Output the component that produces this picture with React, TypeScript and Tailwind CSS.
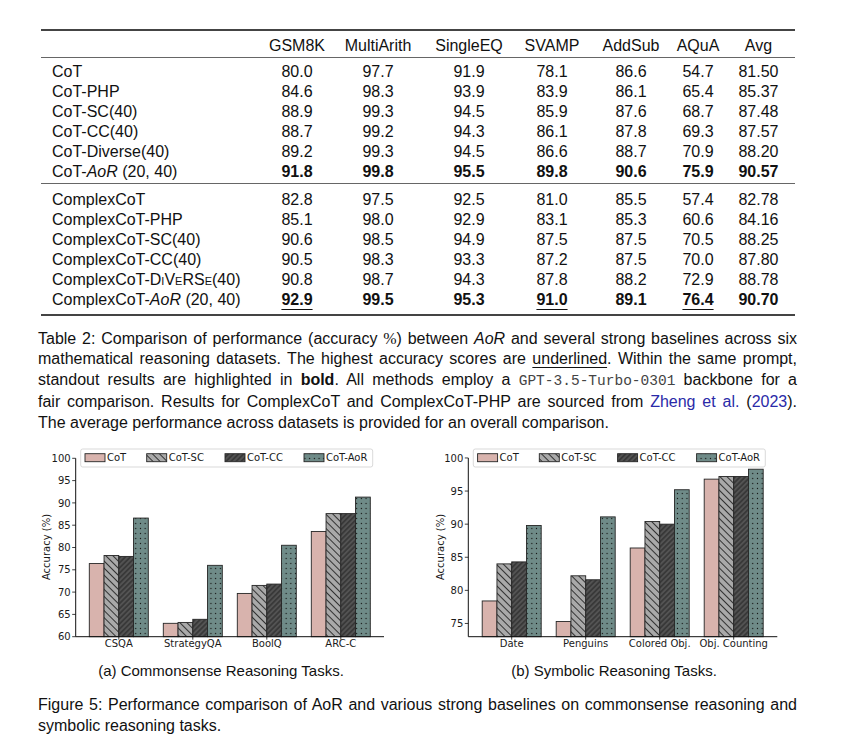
import React from "react";

const colW = ["w-[219px]", "w-[74px]", "w-[88px]", "w-[94px]", "w-[72px]", "w-[86px]", "w-[48px]", "w-[73px]"];
const heads = ["GSM8K", "MultiArith", "SingleEQ", "SVAMP", "AddSub", "AQuA", "Avg"];

type Row = { label: React.ReactNode; vals: string[]; bold?: boolean; under?: number[] };

const cotRows: Row[] = [
  { label: "CoT", vals: ["80.0", "97.7", "91.9", "78.1", "86.6", "54.7", "81.50"] },
  { label: "CoT-PHP", vals: ["84.6", "98.3", "93.9", "83.9", "86.1", "65.4", "85.37"] },
  { label: "CoT-SC(40)", vals: ["88.9", "99.3", "94.5", "85.9", "87.6", "68.7", "87.48"] },
  { label: "CoT-CC(40)", vals: ["88.7", "99.2", "94.3", "86.1", "87.8", "69.3", "87.57"] },
  { label: "CoT-Diverse(40)", vals: ["89.2", "99.3", "94.5", "86.6", "88.7", "70.9", "88.20"] },
  { label: <>CoT-<i>AoR</i> (20, 40)</>, vals: ["91.8", "99.8", "95.5", "89.8", "90.6", "75.9", "90.57"], bold: true },
];

const complexRows: Row[] = [
  { label: "ComplexCoT", vals: ["82.8", "97.5", "92.5", "81.0", "85.5", "57.4", "82.78"] },
  { label: "ComplexCoT-PHP", vals: ["85.1", "98.0", "92.9", "83.1", "85.3", "60.6", "84.16"] },
  { label: "ComplexCoT-SC(40)", vals: ["90.6", "98.5", "94.9", "87.5", "87.5", "70.5", "88.25"] },
  { label: "ComplexCoT-CC(40)", vals: ["90.5", "98.3", "93.3", "87.2", "87.5", "70.0", "87.80"] },
  {
    label: <>ComplexCoT-<span className="[font-variant:small-caps]">DiVeRSe</span>(40)</>,
    vals: ["90.8", "98.7", "94.3", "87.8", "88.2", "72.9", "88.78"],
  },
  { label: <>ComplexCoT-<i>AoR</i> (20, 40)</>, vals: ["92.9", "99.5", "95.3", "91.0", "89.1", "76.4", "90.70"], bold: true, under: [0, 3, 5] },
];

const TableRow = ({ row }: { row: Row }) => (
  <div className="flex h-[20px] items-center leading-[20px]">
    <div className={`${colW[0]} pl-[11px] whitespace-nowrap`}>{row.label}</div>
    {row.vals.map((v, i) => (
      <div key={i} className={`${colW[i + 1]} text-center`}>
        <span
          className={`${row.bold ? "font-bold" : ""} ${row.under?.includes(i) ? "underline decoration-1 underline-offset-[4px]" : ""}`}
        >
          {v}
        </span>
      </div>
    ))}
  </div>
);

type ChartCfg = {
  id: string;
  w: number;
  axisL: number;
  axisR: number;
  c0: number;
  yMin: number;
  px: number;
  ticks: number[];
  groups: string[];
  data: number[][];
  legendX: number;
  ylabelX: number;
};

const BASE = 195.7;
const BAR = 14.75;
const legendNames = ["CoT", "CoT-SC", "CoT-CC", "CoT-AoR"];
const patchOff = [4.3, 66, 144.3, 223.3];

const BarChart = ({ cfg }: { cfg: ChartCfg }) => {
  const y = (v: number) => BASE - (v - cfg.yMin) * cfg.px;
  const fills = [
    "#d8b3ad",
    `url(#${cfg.id}-sc)`,
    `url(#${cfg.id}-cc)`,
    `url(#${cfg.id}-aor)`,
  ];
  return (
    <svg width={cfg.w} height={220} className="block" style={{ fontFamily: '"DejaVu Sans", sans-serif' }}>
      <defs>
        <pattern id={`${cfg.id}-sc`} patternUnits="userSpaceOnUse" width="5" height="5" patternTransform="rotate(45)">
          <rect width="5" height="5" fill="#a9a9a9" />
          <line x1="0" y1="2.5" x2="5" y2="2.5" stroke="#141414" strokeWidth="0.8" />
        </pattern>
        <pattern id={`${cfg.id}-cc`} patternUnits="userSpaceOnUse" width="5" height="3.6" patternTransform="rotate(-45)">
          <rect width="5" height="3.6" fill="#535353" />
          <line x1="0" y1="1.8" x2="5" y2="1.8" stroke="#141414" strokeWidth="0.8" />
        </pattern>
        <pattern id={`${cfg.id}-aor`} patternUnits="userSpaceOnUse" width="4.7" height="5">
          <rect width="4.7" height="5" fill="#6f8b88" />
          <circle cx="2.35" cy="2.5" r="0.65" fill="#141414" />
        </pattern>
      </defs>

      {/* bars */}
      {cfg.data.map((vals, g) => {
        const c = cfg.c0 + g * 74;
        return vals.map((v, k) => (
          <rect
            key={`${g}-${k}`}
            x={c - 29.5 + k * BAR}
            y={y(v)}
            width={BAR}
            height={BASE - y(v)}
            fill={fills[k]}
            stroke="#262626"
            strokeWidth="0.9"
          />
        ));
      })}

      {/* axes */}
      <line x1={cfg.axisL} y1={y(100)} x2={cfg.axisL} y2={BASE} stroke="#111" strokeWidth="1" />
      <line x1={cfg.axisL} y1={BASE} x2={cfg.axisR} y2={BASE} stroke="#111" strokeWidth="1" />
      {cfg.ticks.map((t) => (
        <g key={t}>
          <line x1={cfg.axisL - 3.5} y1={y(t)} x2={cfg.axisL} y2={y(t)} stroke="#111" strokeWidth="0.8" />
          <text x={cfg.axisL - 5} y={y(t)} dy="0.36em" textAnchor="end" fontSize="10" fill="#1a1a1a">
            {t}
          </text>
        </g>
      ))}
      {cfg.groups.map((g, i) => (
        <g key={g}>
          <line x1={cfg.c0 + i * 74} y1={BASE} x2={cfg.c0 + i * 74} y2={BASE + 3} stroke="#111" strokeWidth="0.8" />
          <text x={cfg.c0 + i * 74} y={206} textAnchor="middle" fontSize="10" fill="#1a1a1a">
            {g}
          </text>
        </g>
      ))}
      <text
        x={cfg.ylabelX}
        y={106}
        dy="0.36em"
        textAnchor="middle"
        fontSize="10"
        fill="#1a1a1a"
        transform={`rotate(-90 ${cfg.ylabelX} 106)`}
      >
        Accuracy (%)
      </text>

      {/* legend */}
      <rect x={cfg.legendX} y={8} width={292} height={18} rx={2} fill="#fff" fillOpacity="0.85" stroke="#cfcfcf" strokeWidth="0.8" />
      {legendNames.map((n, k) => (
        <g key={n}>
          <rect x={cfg.legendX + patchOff[k]} y={12.7} width={20} height={8} fill={fills[k]} stroke="#262626" strokeWidth="0.9" />
          <text x={cfg.legendX + patchOff[k] + 22} y={20.4} fontSize="10" fill="#1a1a1a">
            {n}
          </text>
        </g>
      ))}
    </svg>
  );
};

const left: ChartCfg = {
  id: "fa",
  w: 382,
  axisL: 45.7,
  axisR: 354,
  c0: 88.8,
  yMin: 60,
  px: 4.46,
  ticks: [60, 65, 70, 75, 80, 85, 90, 95, 100],
  groups: ["CSQA", "StrategyQA", "BoolQ", "ARC-C"],
  data: [
    [76.4, 78.2, 78.0, 86.6],
    [63.0, 63.2, 63.9, 76.0],
    [69.7, 71.5, 71.8, 80.5],
    [83.6, 87.6, 87.6, 91.3],
  ],
  legendX: 50.7,
  ylabelX: 16.7,
};

const right: ChartCfg = {
  id: "fb",
  w: 404,
  axisL: 56.3,
  axisR: 365.3,
  c0: 99.7,
  yMin: 73,
  px: 6.62,
  ticks: [75, 80, 85, 90, 95, 100],
  groups: ["Date", "Penguins", "Colored Obj.", "Obj. Counting"],
  data: [
    [78.4, 84.0, 84.3, 89.8],
    [75.3, 82.2, 81.6, 91.1],
    [86.4, 90.4, 90.0, 95.2],
    [96.8, 97.2, 97.2, 98.3],
  ],
  legendX: 61.3,
  ylabelX: 28.7,
};

const just = "w-[759px] text-justify [text-align-last:justify]";

export default function App() {
  return (
    <div className="w-[857px] h-[742px] bg-white text-[#111] font-['Liberation_Sans',Arial,sans-serif] text-[16px] overflow-hidden">
      {/* Table */}
      <div className="ml-[41px] w-[754px] pt-[29px]">
        <div className="h-[2px] bg-[#444]" />
        <div className="mt-[5px] flex h-[20px] items-center leading-[20px]">
          <div className={colW[0]} />
          {heads.map((h, i) => (
            <div key={h} className={`${colW[i + 1]} text-center`}>
              {h}
            </div>
          ))}
        </div>
        <div className="mt-[1px] h-[1px] bg-[#666]" />
        <div className="mt-[4px]">
          {cotRows.map((r, i) => (
            <TableRow key={i} row={r} />
          ))}
        </div>
        <div className="mt-[1px] h-[1px] bg-[#666]" />
        <div className="mt-[6px]">
          {complexRows.map((r, i) => (
            <TableRow key={i} row={r} />
          ))}
        </div>
        <div className="mt-[4px] h-[2px] bg-[#444]" />
      </div>

      {/* Table caption */}
      <div className="ml-[38px] mt-[12.5px] leading-[20.75px]">
        <div className={just}>
          Table 2: Comparison of performance (accuracy <span className="font-['Liberation_Serif',serif]">%</span>) between <i>AoR</i> and
          several strong baselines across six
        </div>
        <div className={just}>
          mathematical reasoning datasets. The highest accuracy scores are{" "}
          <span className="underline decoration-1 underline-offset-[3px]">underlined</span>. Within the same prompt,
        </div>
        <div className={just}>
          standout results are highlighted in <b>bold</b>. All methods employ a{" "}
          <span className="font-['Liberation_Mono',monospace] text-[14.5px] text-[#444]">GPT-3.5-Turbo-0301</span> backbone for a
        </div>
        <div className={just}>
          fair comparison. Results for ComplexCoT and ComplexCoT-PHP are sourced from{" "}
          <span className="text-[#2a2aa8]">Zheng et al.</span> (<span className="text-[#2a2aa8]">2023</span>).
        </div>
        <div>The average performance across datasets is provided for an overall comparison.</div>
      </div>

      {/* Figure */}
      <div className="ml-[30px] mt-[7.6px] flex">
        <div className="w-[382px]">
          <BarChart cfg={left} />
          <div className="text-center text-[15px] leading-[20px]">(a) Commonsense Reasoning Tasks.</div>
        </div>
        <div className="w-[404px]">
          <BarChart cfg={right} />
          <div className="text-center text-[15px] leading-[20px]">(b) Symbolic Reasoning Tasks.</div>
        </div>
      </div>

      {/* Figure caption */}
      <div className="ml-[38px] mt-[13.5px] leading-[21px]">
        <div className={just}>
          Figure 5: Performance comparison of AoR and various strong baselines on commonsense reasoning and
        </div>
        <div>symbolic reasoning tasks.</div>
      </div>
    </div>
  );
}
